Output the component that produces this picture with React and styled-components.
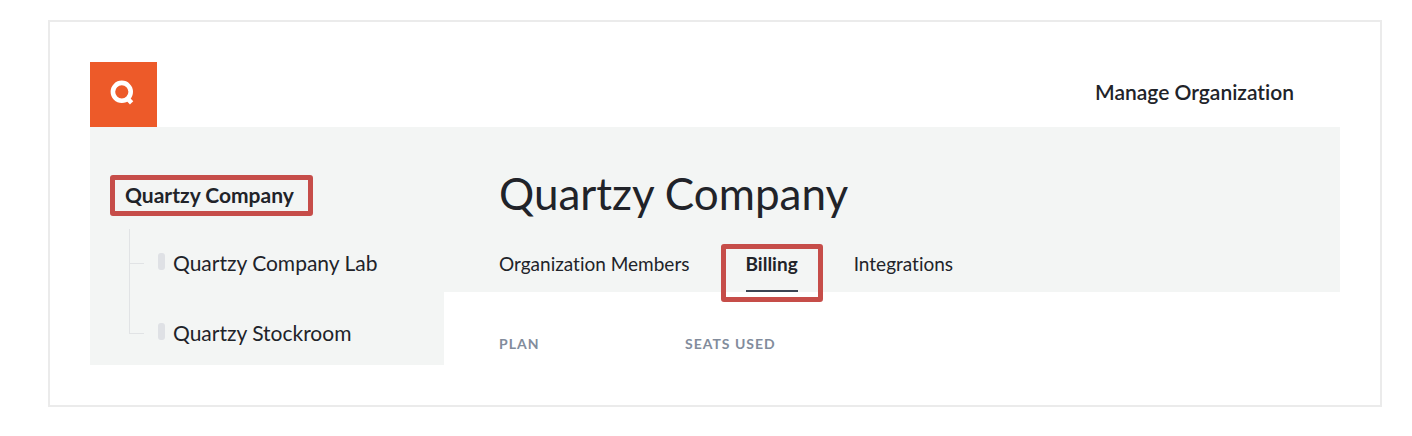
import React from "react";
import styled, { createGlobalStyle } from "styled-components";

const labs = ["Quartzy Company Lab", "Quartzy Stockroom"];
const tabs = ["Organization Members", "Billing", "Integrations"];

const Logo = () => (
  <svg width="24" height="26" viewBox="0 0 24 26" fill="none" stroke="#fff">
    <circle cx="11.8" cy="11.8" r="8.9" strokeWidth="4.6" />
    <path d="M17 18 L21.6 22.8" strokeWidth="4.6" />
  </svg>
);

const App = () => {
  return (
    <>
      <GlobalStyle />
      <Frame>
        <Header>
          <LogoLink href="#" aria-label="Quartzy">
            <Logo />
          </LogoLink>
          <ManageLink href="#">Manage Organization</ManageLink>
        </Header>
        <Body>
          <Sidebar>
            <CompanyLink href="#">Quartzy Company</CompanyLink>
            <LabTree>
              {labs.map((lab) => (
                <LabItem key={lab}>
                  <LabLink href="#">{lab}</LabLink>
                </LabItem>
              ))}
            </LabTree>
          </Sidebar>
          <Main>
            <Hero>
              <Title>Quartzy Company</Title>
              <Tabs>
                {tabs.map((tab) => (
                  <Tab key={tab} href="#" $active={tab === "Billing"}>
                    {tab}
                  </Tab>
                ))}
              </Tabs>
            </Hero>
            <PlanTable>
              <thead>
                <tr>
                  <PlanHeading scope="col">Plan</PlanHeading>
                  <PlanHeading scope="col">Seats used</PlanHeading>
                </tr>
              </thead>
            </PlanTable>
          </Main>
        </Body>
      </Frame>
    </>
  );
};

const GlobalStyle = createGlobalStyle`
  * {
    box-sizing: border-box;
  }
  body {
    margin: 0;
    background: #fff;
    color: #212329;
    font-family: Lato, "Liberation Sans", sans-serif;
    font-variant-ligatures: none;
  }
  a {
    color: inherit;
    text-decoration: none;
  }
`;

const Frame = styled.div`
  margin: 20px 30px 28px 48px;
  padding: 40px;
  border: 2px solid #ebebeb;
`;

const Header = styled.header`
  display: flex;
  align-items: center;
  justify-content: space-between;
  padding-right: 46px;
`;

const LogoLink = styled.a`
  display: flex;
  align-items: center;
  justify-content: center;
  width: 67px;
  height: 65px;
  padding-right: 3px;
  padding-bottom: 4px;
  background: #ed5a29;
`;

const ManageLink = styled.a`
  font-size: 21px;
  font-weight: 600;
  line-height: 24px;
  padding-bottom: 6px;
`;

const Body = styled.div`
  display: flex;
  background: #f3f5f4;
`;

const Sidebar = styled.aside`
  flex: 0 0 354px;
  padding: 48px 20px 0;
`;

const CompanyLink = styled.a`
  display: inline-block;
  padding: 3px 14px 4px 10px;
  border: 5px solid #c64d49;
  border-radius: 3px;
  font-size: 21px;
  font-weight: 700;
  line-height: 24px;
  vertical-align: top;
`;

const LabTree = styled.ul`
  list-style: none;
  margin: 13px 0 0 19px;
  padding: 0 0 31px;
`;

const LabItem = styled.li`
  display: flex;
  align-items: flex-end;
  height: 70px;

  &:first-child {
    height: 35px;
  }

  &::before {
    content: "";
    align-self: stretch;
    width: 14px;
    border-left: 1px solid #e1e3e5;
    border-bottom: 1px solid #e1e3e5;
  }
`;

const LabLink = styled.a`
  display: flex;
  align-items: center;
  gap: 8px;
  margin-left: 14px;
  margin-bottom: -11px;
  font-size: 21px;
  line-height: 24px;

  &::before {
    content: "";
    width: 7px;
    height: 17px;
    margin-bottom: 4px;
    border-radius: 3px;
    background: #dfe1e5;
  }
`;

const Main = styled.main`
  flex: 1;
  display: flex;
  flex-direction: column;
`;

const Hero = styled.div`
  padding: 40px 55px 0;
`;

const Title = styled.h1`
  margin: 0;
  font-size: 44px;
  font-weight: 400;
  line-height: 52px;
`;

const Tabs = styled.nav`
  display: flex;
  gap: 56px;
  margin-top: 32px;
`;

const Tab = styled.a`
  position: relative;
  height: 41px;
  font-size: 19px;
  font-weight: ${({ $active }) => ($active ? 700 : 400)};
  line-height: 26px;
  border-bottom: 2px solid ${({ $active }) => ($active ? "#3b4453" : "transparent")};

  &::after {
    content: "";
    display: ${({ $active }) => ($active ? "block" : "none")};
    position: absolute;
    inset: -7px -25px -12px;
    border: 5px solid #c64d49;
    border-radius: 3px;
  }
`;

const PlanTable = styled.table`
  flex: 1;
  display: block;
  padding: 43px 55px 12px;
  border-spacing: 0;
  background: #fff;
`;

const PlanHeading = styled.th`
  min-width: 186px;
  padding: 0;
  color: #828c9c;
  font-size: 14px;
  font-weight: 700;
  line-height: 18px;
  letter-spacing: 1px;
  text-align: left;
  text-transform: uppercase;
`;

export default App;
